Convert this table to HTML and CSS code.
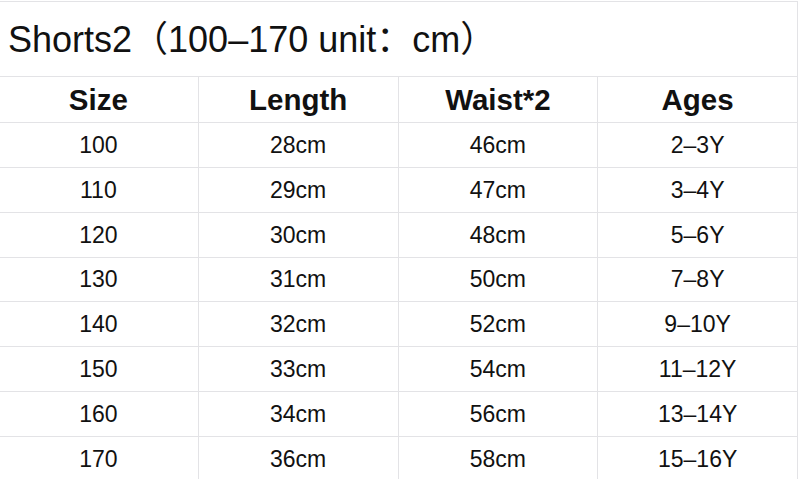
FILE: index.html
```html
<!DOCTYPE html>
<html>
<head>
<meta charset="utf-8">
<link rel="stylesheet" href="styles.css">
</head>
<body>
<table class="size-table">
  <tr class="title-row"><td colspan="4" class="title">Shorts2（100–170 unit：cm）</td></tr>
  <tr class="head-row"><th>Size</th><th>Length</th><th>Waist*2</th><th>Ages</th></tr>
  <tr><td>100</td><td>28cm</td><td>46cm</td><td>2–3Y</td></tr>
  <tr><td>110</td><td>29cm</td><td>47cm</td><td>3–4Y</td></tr>
  <tr><td>120</td><td>30cm</td><td>48cm</td><td>5–6Y</td></tr>
  <tr><td>130</td><td>31cm</td><td>50cm</td><td>7–8Y</td></tr>
  <tr><td>140</td><td>32cm</td><td>52cm</td><td>9–10Y</td></tr>
  <tr><td>150</td><td>33cm</td><td>54cm</td><td>11–12Y</td></tr>
  <tr><td>160</td><td>34cm</td><td>56cm</td><td>13–14Y</td></tr>
  <tr><td>170</td><td>36cm</td><td>58cm</td><td>15–16Y</td></tr>
</table>
</body>
</html>
```
FILE: styles.css
```css
html, body {
  margin: 0;
  padding: 0;
  background: #ffffff;
}
body {
  font-family: "Liberation Sans", "Noto Sans CJK SC", sans-serif;
  color: #111111;
  overflow: hidden;
}
.size-table {
  border-collapse: collapse;
  table-layout: fixed;
  width: 800px;
  margin-top: 1px;
  margin-left: -2px;
}
.size-table td,
.size-table th {
  border: 1px solid #e3e3e6;
  width: 200px;
  padding: 0;
  text-align: center;
  vertical-align: middle;
}
.title-row {
  height: 75px;
}
.size-table td.title {
  text-align: left;
  padding-left: 9px;
  padding-bottom: 6px;
  font-size: 36px;
  border-left-color: transparent;
}
.head-row {
  height: 46px;
}
.size-table th {
  font-size: 29.5px;
  font-weight: bold;
  padding-top: 1px;
}
.size-table tr:not(.title-row):not(.head-row) {
  height: 44.85px;
}
.size-table tr:not(.title-row):not(.head-row) td {
  font-size: 23px;
  padding-top: 1px;
}
```
